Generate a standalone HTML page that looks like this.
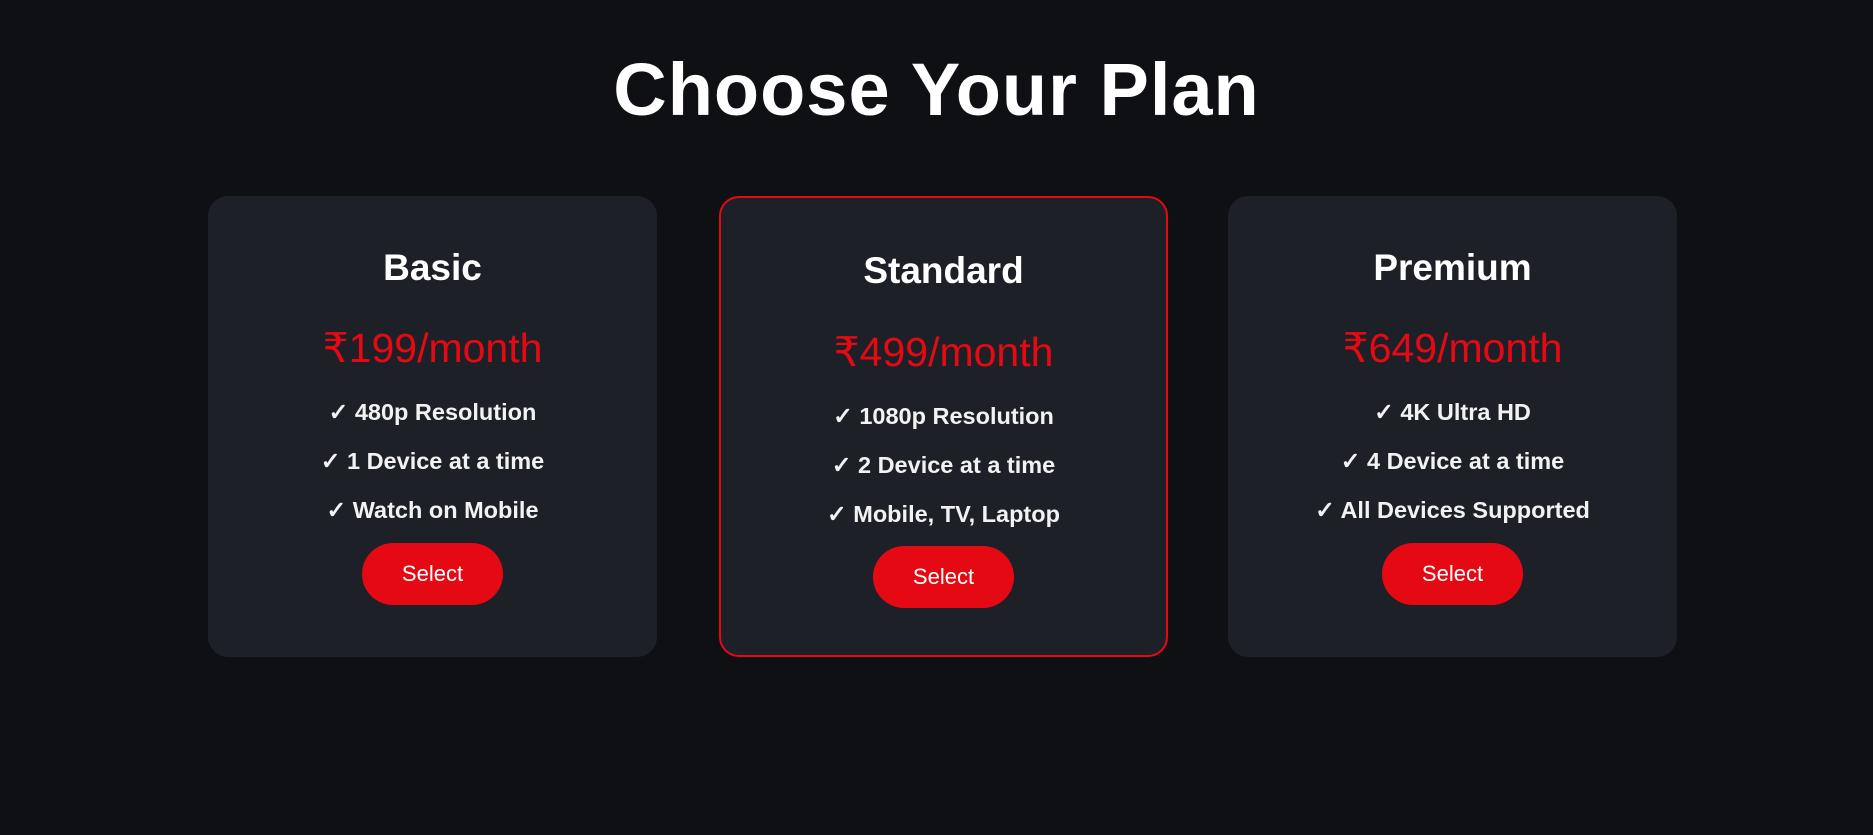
<!DOCTYPE html>
<html><head><meta charset="utf-8"><style>
html,body{margin:0;padding:0;width:1873px;height:835px;background:#0f1014;overflow:hidden;font-family:"Liberation Sans",sans-serif;color:#fff}
h1{position:absolute;top:48px;left:0;width:1873px;text-align:center;margin:0;font-size:74px;font-weight:bold;line-height:84px;letter-spacing:1px}
.card{position:absolute;top:196px;width:449px;height:461px;background:#1e2028;border-radius:20px;box-sizing:border-box;text-align:center}
.card.mid{border:2px solid #e50914}
.t{position:absolute;left:0;width:100%;font-weight:bold;font-size:37px;line-height:40px}
.p{position:absolute;left:0;width:100%;font-size:41px;line-height:44px;color:#e50914}
.f{position:absolute;left:0;width:100%;font-size:23.5px;line-height:28px;font-weight:bold;color:#f2f2f2}
.b{position:absolute;left:154px;width:141px;height:62px;border-radius:31px;background:#e50914;color:#fff;font-size:22px;line-height:62px}
</style></head><body>
<h1>Choose Your Plan</h1>

<div class="card" style="left:208px">
<div class="t" style="top:52px">Basic</div>
<div class="p" style="top:130px">₹199/month</div>
<div class="f" style="top:202px">✓ 480p Resolution</div>
<div class="f" style="top:251px">✓ 1 Device at a time</div>
<div class="f" style="top:300px">✓ Watch on Mobile</div>
<div class="b" style="top:347px">Select</div>
</div>

<div class="card mid" style="left:719px">
<div class="t" style="top:53px">Standard</div>
<div class="p" style="top:132px">₹499/month</div>
<div class="f" style="top:204px">✓ 1080p Resolution</div>
<div class="f" style="top:253px">✓ 2 Device at a time</div>
<div class="f" style="top:302px">✓ Mobile, TV, Laptop</div>
<div class="b" style="top:348px;left:152px">Select</div>
</div>

<div class="card" style="left:1228px">
<div class="t" style="top:52px">Premium</div>
<div class="p" style="top:130px">₹649/month</div>
<div class="f" style="top:202px">✓ 4K Ultra HD</div>
<div class="f" style="top:251px">✓ 4 Device at a time</div>
<div class="f" style="top:300px">✓ All Devices Supported</div>
<div class="b" style="top:347px">Select</div>
</div>
</body></html>
